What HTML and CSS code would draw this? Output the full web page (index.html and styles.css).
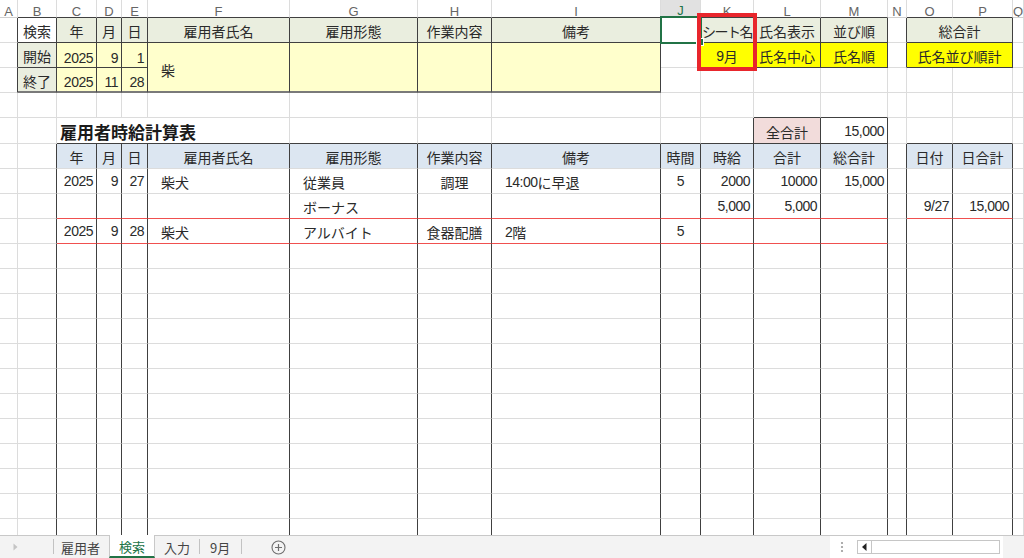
FILE: index.html
```html
<!DOCTYPE html>
<html lang="ja">
<head>
<meta charset="utf-8">
<title>検索</title>
<link rel="stylesheet" href="styles.css">
</head>
<body>
<div class="app">
  <div class="sheet">
    <!-- column headers -->
    <div class="h">A</div><div class="h B">B</div><div class="h B">C</div><div class="h B">D</div><div class="h B">E</div><div class="h B">F</div><div class="h B">G</div><div class="h B">H</div><div class="h B">I</div><div class="h hs">J</div><div class="h B">K</div><div class="h B">L</div><div class="h B">M</div><div class="h">N</div><div class="h B">O</div><div class="h B">P</div><div class="h">Q</div>

    <!-- row 1 -->
    <div class="R"></div>
    <div class="R B c">検索</div>
    <div class="g R B c">年</div>
    <div class="g R B c">月</div>
    <div class="g R B c">日</div>
    <div class="g R B c">雇用者氏名</div>
    <div class="g R B c">雇用形態</div>
    <div class="g R B c">作業内容</div>
    <div class="g R B c">備考</div>
    <div class="R"></div>
    <div class="g R B c tight">シート名</div>
    <div class="g R B c">氏名表示</div>
    <div class="g R B c">並び順</div>
    <div class="R"></div>
    <div class="g R B c s2">総合計</div>
    <div></div>

    <!-- row 2 -->
    <div class="R"></div>
    <div class="g R B c">開始</div>
    <div class="y R B e n lo">2025</div>
    <div class="y R B e n lo">9</div>
    <div class="y R B e n lo">1</div>
    <div class="y R B2 r2 ind lo">柴</div>
    <div class="y R B2 r2"></div>
    <div class="y R B2 r2"></div>
    <div class="y R B2 r2"></div>
    <div class="R"></div>
    <div class="Y R B c"><span class="n">9</span>月</div>
    <div class="Y R B c">氏名中心</div>
    <div class="Y R B c">氏名順</div>
    <div class="R"></div>
    <div class="Y R B c s2">氏名並び順計</div>
    <div></div>

    <!-- row 3 -->
    <div class="R"></div>
    <div class="g R B2 c">終了</div>
    <div class="y R B2 e n lo">2025</div>
    <div class="y R B2 e n lo">11</div>
    <div class="y R B2 e n lo">28</div>
    <div></div><div></div><div></div><div></div><div></div><div></div><div></div><div></div>

    <!-- row 4 -->
    <div></div><div></div><div></div><div></div><div></div><div></div><div></div><div></div><div></div><div></div><div></div><div class="B"></div><div class="B"></div><div></div><div></div><div></div><div></div>

    <!-- row 5 -->
    <div></div>
    <div></div>
    <div class="title B s4">雇用者時給計算表</div>
    <div class="B"></div>
    <div class="B"></div>
    <div class="B"></div>
    <div class="B"></div>
    <div class="R B"></div>
    <div class="p R B c">全合計</div>
    <div class="R B e n">15,000</div>
    <div></div>
    <div class="B"></div>
    <div class="B"></div>
    <div></div>

    <!-- row 6 : table header -->
    <div></div>
    <div class="R"></div>
    <div class="u R c">年</div>
    <div class="u R c">月</div>
    <div class="u R c">日</div>
    <div class="u R c">雇用者氏名</div>
    <div class="u R c">雇用形態</div>
    <div class="u R c">作業内容</div>
    <div class="u R c">備考</div>
    <div class="u R c">時間</div>
    <div class="u R c">時給</div>
    <div class="u R c">合計</div>
    <div class="u R c">総合計</div>
    <div class="R"></div>
    <div class="u R c">日付</div>
    <div class="u R c">日合計</div>
    <div></div>

    <!-- row 7 -->
    <div></div>
    <div class="R"></div>
    <div class="R e n">2025</div>
    <div class="R e n">9</div>
    <div class="R e n">27</div>
    <div class="R ind">柴犬</div>
    <div class="R ind">従業員</div>
    <div class="R c">調理</div>
    <div class="R ind"><span class="n">14:00</span>に早退</div>
    <div class="R c n">5</div>
    <div class="R e n">2000</div>
    <div class="R e n">10000</div>
    <div class="R e n">15,000</div>
    <div class="R"></div>
    <div class="R"></div>
    <div class="R"></div>
    <div></div>

    <!-- row 8 -->
    <div></div>
    <div class="R"></div>
    <div class="R X"></div>
    <div class="R X"></div>
    <div class="R X"></div>
    <div class="R X"></div>
    <div class="R X ind">ボーナス</div>
    <div class="R X"></div>
    <div class="R X"></div>
    <div class="R X"></div>
    <div class="R X e n">5,000</div>
    <div class="R X e n">5,000</div>
    <div class="R X"></div>
    <div class="R"></div>
    <div class="R X e n">9/27</div>
    <div class="R X e n">15,000</div>
    <div></div>

    <!-- row 9 -->
    <div></div>
    <div class="R"></div>
    <div class="R X e n">2025</div>
    <div class="R X e n">9</div>
    <div class="R X e n">28</div>
    <div class="R X ind">柴犬</div>
    <div class="R X ind">アルバイト</div>
    <div class="R X c">食器配膳</div>
    <div class="R X ind"><span class="n">2</span>階</div>
    <div class="R X c n">5</div>
    <div class="R X"></div>
    <div class="R X"></div>
    <div class="R X"></div>
    <div class="R"></div>
    <div class="R"></div>
    <div class="R"></div>
    <div></div>

    <!-- rows 10-21 -->
    <div></div><div class="R"></div><div class="R"></div><div class="R"></div><div class="R"></div><div class="R"></div><div class="R"></div><div class="R"></div><div class="R"></div><div class="R"></div><div class="R"></div><div class="R"></div><div class="R"></div><div class="R"></div><div class="R"></div><div class="R"></div><div></div>
    <div></div><div class="R"></div><div class="R"></div><div class="R"></div><div class="R"></div><div class="R"></div><div class="R"></div><div class="R"></div><div class="R"></div><div class="R"></div><div class="R"></div><div class="R"></div><div class="R"></div><div class="R"></div><div class="R"></div><div class="R"></div><div></div>
    <div></div><div class="R"></div><div class="R"></div><div class="R"></div><div class="R"></div><div class="R"></div><div class="R"></div><div class="R"></div><div class="R"></div><div class="R"></div><div class="R"></div><div class="R"></div><div class="R"></div><div class="R"></div><div class="R"></div><div class="R"></div><div></div>
    <div></div><div class="R"></div><div class="R"></div><div class="R"></div><div class="R"></div><div class="R"></div><div class="R"></div><div class="R"></div><div class="R"></div><div class="R"></div><div class="R"></div><div class="R"></div><div class="R"></div><div class="R"></div><div class="R"></div><div class="R"></div><div></div>
    <div></div><div class="R"></div><div class="R"></div><div class="R"></div><div class="R"></div><div class="R"></div><div class="R"></div><div class="R"></div><div class="R"></div><div class="R"></div><div class="R"></div><div class="R"></div><div class="R"></div><div class="R"></div><div class="R"></div><div class="R"></div><div></div>
    <div></div><div class="R"></div><div class="R"></div><div class="R"></div><div class="R"></div><div class="R"></div><div class="R"></div><div class="R"></div><div class="R"></div><div class="R"></div><div class="R"></div><div class="R"></div><div class="R"></div><div class="R"></div><div class="R"></div><div class="R"></div><div></div>
    <div></div><div class="R"></div><div class="R"></div><div class="R"></div><div class="R"></div><div class="R"></div><div class="R"></div><div class="R"></div><div class="R"></div><div class="R"></div><div class="R"></div><div class="R"></div><div class="R"></div><div class="R"></div><div class="R"></div><div class="R"></div><div></div>
    <div></div><div class="R"></div><div class="R"></div><div class="R"></div><div class="R"></div><div class="R"></div><div class="R"></div><div class="R"></div><div class="R"></div><div class="R"></div><div class="R"></div><div class="R"></div><div class="R"></div><div class="R"></div><div class="R"></div><div class="R"></div><div></div>
    <div></div><div class="R"></div><div class="R"></div><div class="R"></div><div class="R"></div><div class="R"></div><div class="R"></div><div class="R"></div><div class="R"></div><div class="R"></div><div class="R"></div><div class="R"></div><div class="R"></div><div class="R"></div><div class="R"></div><div class="R"></div><div></div>
    <div></div><div class="R"></div><div class="R"></div><div class="R"></div><div class="R"></div><div class="R"></div><div class="R"></div><div class="R"></div><div class="R"></div><div class="R"></div><div class="R"></div><div class="R"></div><div class="R"></div><div class="R"></div><div class="R"></div><div class="R"></div><div></div>
    <div></div><div class="R"></div><div class="R"></div><div class="R"></div><div class="R"></div><div class="R"></div><div class="R"></div><div class="R"></div><div class="R"></div><div class="R"></div><div class="R"></div><div class="R"></div><div class="R"></div><div class="R"></div><div class="R"></div><div class="R"></div><div></div>
    <div></div><div class="R"></div><div class="R"></div><div class="R"></div><div class="R"></div><div class="R"></div><div class="R"></div><div class="R"></div><div class="R"></div><div class="R"></div><div class="R"></div><div class="R"></div><div class="R"></div><div class="R"></div><div class="R"></div><div class="R"></div><div></div>

    <span class="sel"></span>
    <span class="hl"></span>
  </div>

  <div class="tabs">
    <div class="nav"><svg width="5" height="8" viewBox="0 0 5 8"><path d="M0.5 0.5 L4.5 4 L0.5 7.5 Z" fill="#c4c4c4"/></svg></div>
    <span class="sep"></span>
    <div class="tab first">雇用者</div>
    <div class="tab on">検索</div>
    <div class="tab">入力</div>
    <span class="sep"></span>
    <div class="tab last">9月</div>
    <span class="sep"></span>
    <div class="add"><svg width="15" height="15" viewBox="0 0 15 15"><circle cx="7.5" cy="7.5" r="6.5" fill="none" stroke="#6e6e6e" stroke-width="1.1"/><path d="M7.5 4v7M4 7.5h7" stroke="#6e6e6e" stroke-width="1.2"/></svg></div>
    <div class="right">
      <svg class="dots" width="4" height="12" viewBox="0 0 4 12"><circle cx="2" cy="2" r="1.1" fill="#9a9a9a"/><circle cx="2" cy="6" r="1.1" fill="#9a9a9a"/><circle cx="2" cy="10" r="1.1" fill="#9a9a9a"/></svg>
      <div class="scroll"><div class="sbtn"><svg width="5" height="8" viewBox="0 0 5 8"><path d="M4.5 0 L0 4 L4.5 8 Z" fill="#222"/></svg></div></div>
    </div>
  </div>
</div>
</body>
</html>
```

FILE: styles.css
```css
* { box-sizing: border-box; margin: 0; padding: 0; }
html, body { width: 1024px; height: 558px; overflow: hidden; background: #fff; }
body { font-family: "Noto Sans CJK JP", "Noto Sans", sans-serif; color: #2a2a2a; }

.app { display: flex; flex-direction: column; height: 558px; }

.sheet {
  position: relative;
  flex: 1;
  min-height: 0;
  overflow: hidden;
  display: grid;
  grid-template-columns: 18px 39px 40px 25px 26px 142px 128px 74px 169px 40px 53px 67px 67px 19px 46px 60px 1fr;
  grid-template-rows: 18px repeat(4, 25px) 26px;
  grid-auto-rows: 25px;
  align-content: start;
  font-size: 14px;
}

.sheet > :where(div) {
  border-right: 1px solid #dcdcdc;
  border-bottom: 1px solid #dcdcdc;
  display: flex;
  align-items: center;
  padding: 2px 3px 0;
  white-space: nowrap;
  overflow: hidden;
  min-width: 0;
}

/* column header row */
.h {
  font-family: "Liberation Sans", sans-serif;
  font-size: 13px;
  color: #666;
  justify-content: center;
  padding-top: 5px;
  border-bottom-color: #d0d0d0;
}
.hs {
  background: #e1e1e1;
  color: #217346;
  border-bottom: 2px solid #217346;
}

/* borders */
.R { border-right-color: #404040; }
.B { border-bottom-color: #404040; }
.B2 { border-bottom: 2px solid #7a7a7a; }
.X { border-bottom-color: #f0504f; }

/* fills */
.g { background: #eaeedf; }
.y { background: #ffffcc; }
.Y { background: #ffff00; }
.p { background: #f2dcdb; }
.u { background: #dce6f1; }

/* alignment */
.c { justify-content: center; }
.e { justify-content: flex-end; }
.ind { padding-left: 13px; }
.n { font-family: "Liberation Sans", "Noto Sans CJK JP", sans-serif; font-size: 14px; letter-spacing: -0.5px; padding-top: 0; }
.lo { padding-top: 5px; }
.tight { letter-spacing: -1.5px; padding-left: 0; padding-right: 0; }

/* spans */
.s2 { grid-column: span 2; }
.s4 { grid-column: span 4; }
.r2 { grid-row: span 2; }

.title { font-size: 17px; font-weight: 700; color: #1a1a1a; }

/* overlays */
.sel {
  position: absolute;
  left: 660px;
  top: 16px;
  width: 42px;
  height: 28px;
  border: 2px solid #217346;
}
.sel::after {
  content: "";
  position: absolute;
  right: -4px;
  bottom: -4px;
  width: 6px;
  height: 6px;
  background: #217346;
  border: 1px solid #fff;
}
.hl {
  position: absolute;
  left: 697px;
  top: 13px;
  width: 60px;
  height: 58px;
  border: 4px solid #e8262c;
}

/* sheet tabs */
.tabs {
  height: 23px;
  flex: none;
  display: flex;
  align-items: stretch;
  background: #f3f3f3;
  border-top: 1px solid #c8c8c8;
  font-size: 13px;
  color: #444;
}
.nav { width: 53px; display: flex; align-items: center; padding-left: 13px; }
.sep { width: 1px; background: #c2c2c2; margin: 3px 0 4px; }
.tab { display: flex; align-items: center; padding: 0 9px; }
.tab.first { padding-left: 7px; }
.tab.last { padding: 0 11px 0 10px; }
.tab.on {
  background: #fff;
  color: #217346;
  border-left: 1px solid #c8c8c8;
  border-right: 1px solid #c8c8c8;
  border-bottom: 2px solid #217346;
  margin-top: -1px;
  padding: 1px 9px 0;
}
.add { display: flex; align-items: center; margin-left: 29px; }

.right {
  margin-left: auto;
  margin-right: 21px;
  width: 173px;
  background: #fff;
  display: flex;
  align-items: center;
  padding-left: 10px;
}
.dots { display: block; }
.scroll {
  margin-left: 13px;
  width: 143px;
  height: 14px;
  border: 1px solid #c6c6c6;
  background: #fff;
  display: flex;
}
.sbtn {
  width: 14px;
  border-right: 1px solid #c6c6c6;
  display: flex;
  align-items: center;
  justify-content: center;
}
```
